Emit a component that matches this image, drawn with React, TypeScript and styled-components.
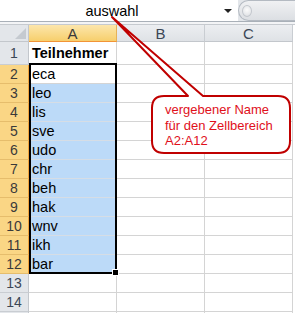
import React from 'react'
import styled, { createGlobalStyle } from 'styled-components'

const GlobalStyle = createGlobalStyle`
  html, body {
    margin: 0;
    padding: 0;
    background: #ffffff;
  }
`

const names = ['eca', 'leo', 'lis', 'sve', 'udo', 'chr', 'beh', 'hak', 'wnv', 'ikh', 'bar']
const columns = ['A', 'B', 'C']

export default function App() {
  const rows: { num: number; a: string }[] = [{ num: 1, a: 'Teilnehmer' }]
  names.forEach((n, i) => rows.push({ num: i + 2, a: n }))
  rows.push({ num: 13, a: '' }, { num: 14, a: '' }, { num: 15, a: '' })

  return (
    <>
      <GlobalStyle />
      <Page>
        <TopBar>
          <NameBox>
            <NameText>auswahl</NameText>
            <DropArrow />
          </NameBox>
          <Splitter>
            <Knob />
          </Splitter>
        </TopBar>
        <Strip />
        <Sheet>
          <Corner />
          {columns.map((c) => (
            <ColHead key={c} $selected={c === 'A'}>
              {c}
            </ColHead>
          ))}
          <Edge />
          {rows.map((r) => {
            const inSel = r.num >= 2 && r.num <= 12
            return (
              <React.Fragment key={r.num}>
                {/* row 15 only peeks in at the bottom edge, so no number */}
                <RowHead $selected={inSel}>{r.num < 15 ? r.num : ''}</RowHead>
                <Cell $selected={inSel && r.num !== 2} $bold={r.num === 1}>
                  {r.a}
                </Cell>
                <Cell />
                <Cell />
                <Edge />
              </React.Fragment>
            )
          })}
          <Selection>
            <FillHandle />
          </Selection>
        </Sheet>
        <CalloutShape width="295" height="313" viewBox="0 0 295 313">
          <path
            d="M164 96 L188 96 L112 17 L203 96 L278 96 Q290 96 290 108 L290 141 Q290 153 278 153 L164 153 Q152 153 152 141 L152 108 Q152 96 164 96 Z"
            fill="#ffffff"
            stroke="#c00000"
            strokeWidth="2"
            strokeLinejoin="round"
          />
        </CalloutShape>
        <CalloutText>
          vergebener Name
          <br />
          für den Zellbereich
          <br />
          A2:A12
        </CalloutText>
      </Page>
    </>
  )
}

const Page = styled.div`
  position: relative;
  width: 295px;
  height: 313px;
  overflow: hidden;
  background: #ffffff;
  font-family: 'Liberation Sans', Arial, sans-serif;
`

const TopBar = styled.div`
  display: flex;
  height: 21px;
  border-bottom: 1px solid #a9b0b8;
  background: #e3e6ea;
`

const NameBox = styled.div`
  display: flex;
  align-items: center;
  width: 238px;
  background: #ffffff;
`

const NameText = styled.div`
  flex: 1;
  text-align: center;
  font-size: 14.5px;
  color: #000000;
  padding-top: 1px;
`

const DropArrow = styled.div`
  width: 0;
  height: 0;
  margin: 1px 6px 0 0;
  border-left: 4px solid transparent;
  border-right: 4px solid transparent;
  border-top: 4px solid #222222;
`

const Splitter = styled.div`
  flex: 1;
  display: flex;
  align-items: center;
  border: 1px solid #b4bac2;
  border-right: none;
  border-radius: 11px 0 0 11px;
  background: linear-gradient(#f0f1f3, #dcdfe3);
`

const Knob = styled.div`
  width: 8px;
  height: 10px;
  margin-left: 3px;
  border-radius: 50%;
  border: 1px solid #c3c7cd;
  background: radial-gradient(circle at 50% 40%, #fbfbfb, #dadde1);
`

const Strip = styled.div`
  height: 2px;
  background: #f3f4f6;
  border-bottom: 1px solid #c6cacf;
`

const Sheet = styled.div`
  position: relative;
  display: grid;
  grid-template-columns: 29px 88px 88px 88px 2px;
  grid-template-rows: 17px 23px repeat(14, 19px);
`

const Corner = styled.div`
  position: relative;
  background: #e3e6ea;
  border-right: 1px solid #c3c7cc;
  border-bottom: 1px solid #c3c7cc;

  &::after {
    content: '';
    position: absolute;
    right: 2px;
    bottom: 2px;
    width: 0;
    height: 0;
    border-left: 11px solid transparent;
    border-bottom: 11px solid #c5cad0;
  }
`

const ColHead = styled.div<{ $selected?: boolean }>`
  display: flex;
  align-items: center;
  justify-content: center;
  font-size: 15px;
  color: ${({ $selected }) => ($selected ? '#3a3a3a' : '#3b4756')};
  background: ${({ $selected }) =>
    $selected ? 'linear-gradient(#fce6ac, #f7cf6c)' : 'linear-gradient(#eceef1, #dfe2e6)'};
  border-right: 1px solid ${({ $selected }) => ($selected ? '#e6b257' : '#c9cdd2')};
  border-bottom: 1px solid ${({ $selected }) => ($selected ? '#f29436' : '#c3c7cc')};
`

const RowHead = styled.div<{ $selected?: boolean }>`
  display: flex;
  align-items: center;
  justify-content: center;
  font-size: 14px;
  color: ${({ $selected }) => ($selected ? '#3a3a3a' : '#3b4756')};
  background: ${({ $selected }) => ($selected ? '#fad685' : '#e3e6ea')};
  border-right: 1px solid ${({ $selected }) => ($selected ? '#f0a23c' : '#c3c7cc')};
  border-bottom: 1px solid ${({ $selected }) => ($selected ? '#e6bd6c' : '#c9cdd2')};
`

const Cell = styled.div<{ $selected?: boolean; $bold?: boolean }>`
  display: flex;
  align-items: center;
  padding-left: 3px;
  font-size: 14.5px;
  font-weight: ${({ $bold }) => ($bold ? 700 : 400)};
  color: #000000;
  white-space: nowrap;
  background: ${({ $selected }) => ($selected ? '#bcdaf8' : '#ffffff')};
  border-right: 1px solid #d4d4d4;
  border-bottom: 1px solid ${({ $selected }) => ($selected ? '#d6dde5' : '#d4d4d4')};
`

const Edge = styled.div`
  background: #ffffff;
`

const Selection = styled.div`
  position: absolute;
  left: 29px;
  top: 38px;
  width: 88px;
  height: 211px;
  box-sizing: border-box;
  border: 2px solid #000000;
  pointer-events: none;
`

const FillHandle = styled.div`
  position: absolute;
  right: -4px;
  bottom: -4px;
  width: 5px;
  height: 5px;
  background: #000000;
  border: 1px solid #ffffff;
`

const CalloutShape = styled.svg`
  position: absolute;
  left: 0;
  top: 0;
  pointer-events: none;
`

const CalloutText = styled.div`
  position: absolute;
  left: 165px;
  top: 102px;
  font-size: 13px;
  line-height: 15.5px;
  color: #e0101b;
  white-space: nowrap;
`
